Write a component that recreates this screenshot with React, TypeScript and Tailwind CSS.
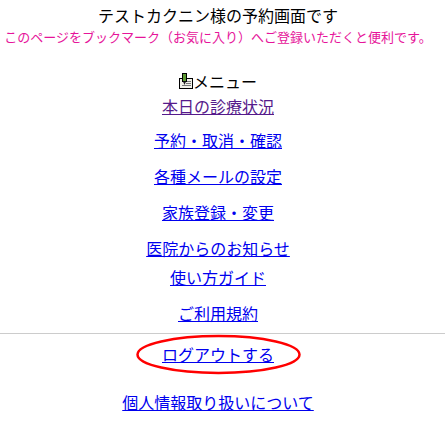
const links = [
  { label: "予約・取消・確認", className: "mt-[10px]" },
  { label: "各種メールの設定", className: "mt-[12px]" },
  { label: "家族登録・変更", className: "mt-[12px]" },
  { label: "医院からのお知らせ", className: "mt-[12px]" },
  { label: "使い方ガイド", className: "mt-[5px]" },
  { label: "ご利用規約", className: "mt-[12px]" },
];

const MenuIcon = () => (
  <svg width="14" height="16" viewBox="0 0 14 16" className="mt-[2px] block self-start">
    <rect x="0.5" y="5.5" width="13" height="10" fill="#f2f2ea" stroke="#000" />
    <path d="M7 8.5h5M7 10.5h5M3 12.5h9" stroke="#777" strokeWidth="1" />
    <rect x="3.5" y="0.5" width="4" height="8" fill="#5c9a32" stroke="#000" />
    <path d="M4 8.5h3L5.5 12z" fill="#222" />
  </svg>
);

export default function App() {
  return (
    <div className="h-[423px] w-[445px] overflow-hidden bg-white text-[16px] leading-[24px] text-black font-['Liberation_Sans','Noto_Sans_CJK_JP',sans-serif]">
      <div className="w-[436px] text-center">
        <div className="pt-[5px]">テストカクニン様の予約画面です</div>
        <div className="-mt-[2px] text-[13px] leading-[22px] text-[#e6149a]">
          このページをブックマーク（お気に入り）へご登録いただくと便利です。
        </div>

        <div className="mt-[22px] flex items-center justify-center">
          <MenuIcon />
          <span>メニュー</span>
        </div>
        <a href="#visited" className="mt-[1px] block text-[#551a8b] underline">
          本日の診療状況
        </a>

        {links.map((link) => (
          <a key={link.label} href="#" className={`block text-[#0000ee] underline ${link.className}`}>
            {link.label}
          </a>
        ))}
      </div>

      <div className="mt-[6px] border-t border-[#cccccc]" />

      <div className="w-[436px] text-center">
        <div className="relative mx-auto mt-[10px] w-[164px]">
          <a href="#" className="block text-[#0000ee] underline">
            ログアウトする
          </a>
          {/* hand drawn ring round the logout link */}
          <svg width="170" height="44" viewBox="0 0 170 44" className="absolute -left-[3px] -top-[10px]">
            <ellipse cx="85.5" cy="20.5" rx="81" ry="18.5" fill="none" stroke="#ff0000" strokeWidth="2.5" />
          </svg>
        </div>

        <a href="#" className="mt-[24px] block text-[#0000ee] underline">
          個人情報取り扱いについて
        </a>
      </div>

      {/* tops of the next row, cut off by the window */}
      <div className="ml-[143px] mt-[7px] flex gap-[71px]">
        <div className="h-[1px] w-[1px] bg-[#aaaaaa]" />
        <div className="h-[1px] w-[1px] bg-[#aaaaaa]" />
        <div className="h-[1px] w-[1px] bg-[#aaaaaa]" />
      </div>
    </div>
  );
}
